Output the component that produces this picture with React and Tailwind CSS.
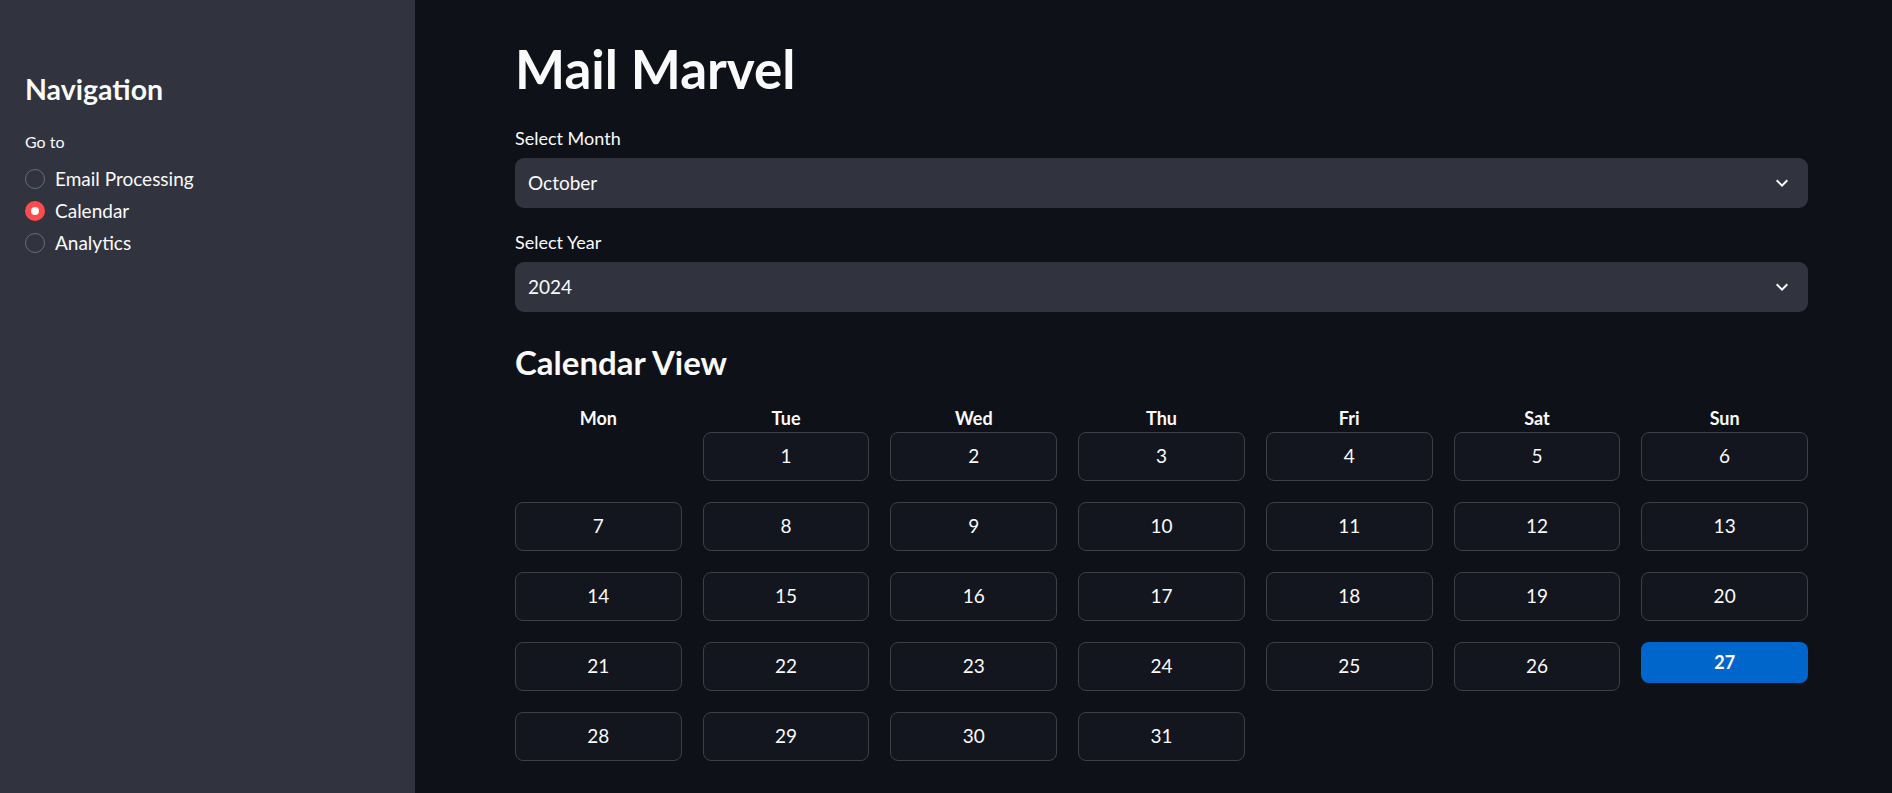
import { useState } from "react";

const FONT = { fontFamily: "Lato, 'Noto Sans', 'Liberation Sans', sans-serif" };

const MONTHS = ["October"];
const DAYS = ["Mon", "Tue", "Wed", "Thu", "Fri", "Sat", "Sun"];

// material "expand_more"
function Chevron() {
  return (
    <svg width="24" height="24" viewBox="0 0 24 24" fill="#fafafa">
      <path d="M16.59 8.59L12 13.17 7.41 8.59 6 10l6 6 6-6z" />
    </svg>
  );
}

function SelectBox({ label, value }) {
  return (
    <div>
      <div className="text-[18px] leading-[24px] text-[#fafafa] mb-2">{label}</div>
      <div className="h-[50px] rounded-[9px] bg-[#31333f] flex items-center justify-between pl-[13px] pr-[14px]">
        <span className="text-[19px] text-[#fafafa]">{value}</span>
        <Chevron />
      </div>
    </div>
  );
}

function Radio({ label, checked, onClick }) {
  return (
    <div className="h-8 flex items-center gap-[10px] cursor-pointer" onClick={onClick}>
      {checked ? (
        <span className="w-5 h-5 rounded-full bg-[#ff4b4b] flex items-center justify-center ml-px">
          <span className="w-[8px] h-[8px] rounded-full bg-[#fafafa]" />
        </span>
      ) : (
        <span className="w-5 h-5 rounded-full border border-[#6b6d76] ml-px" />
      )}
      <span className="text-[19px] text-[#fafafa]">{label}</span>
    </div>
  );
}

export default function App() {
  const [page, setPage] = useState("Calendar");
  const [picked, setPicked] = useState(27);

  // October 2024 starts on a Tuesday
  const cells = [null, ...Array.from({ length: 31 }, (_, i) => i + 1)];

  return (
    <div className="flex w-full h-[793px] overflow-hidden bg-[#0e1117]" style={FONT}>
      {/* SIDEBAR */}
      <aside className="w-[415px] shrink-0 bg-[#31333f] pl-[25px] pt-[71px]">
        <h2 className="text-[28.5px] leading-[36px] font-bold text-[#fafafa]">Navigation</h2>
        <div className="mt-[25px] text-[16px] leading-[20px] text-[#fafafa]">Go to</div>
        <div className="mt-[11px] -ml-px">
          {["Email Processing", "Calendar", "Analytics"].map((p) => (
            <Radio key={p} label={p} checked={page === p} onClick={() => setPage(p)} />
          ))}
        </div>
      </aside>

      {/* MAIN */}
      <main className="flex-1 pl-[100px] pr-[84px] pt-[39px]">
        <h1 className="text-[53px] leading-[60px] font-bold text-[#fafafa]">Mail Marvel</h1>

        <div className="mt-[27px]">
          <SelectBox label="Select Month" value={MONTHS[0]} />
        </div>
        <div className="mt-[22px]">
          <SelectBox label="Select Year" value="2024" />
        </div>

        <h3 className="mt-[30px] text-[33px] leading-[40px] font-bold text-[#fafafa]">Calendar View</h3>

        <div className="mt-[24px] grid grid-cols-7 gap-x-[21px]">
          {DAYS.map((d) => (
            <div key={d} className="text-center text-[18px] leading-[24px] font-bold text-[#fafafa]">
              {d}
            </div>
          ))}
        </div>

        <div className="mt-[2px] grid grid-cols-7 gap-x-[21px] gap-y-[21px]">
          {cells.map((n, i) =>
            n === null ? (
              <div key={i} className="h-[49px]" />
            ) : n === picked ? (
              <div key={i} className="h-[49px]">
                <button className="w-full h-[41px] rounded-[8px] bg-[#0066cc] text-white text-[18px] font-bold">
                  {n}
                </button>
              </div>
            ) : (
              <button
                key={i}
                onClick={() => setPicked(n)}
                className="h-[49px] rounded-[8px] border border-[#3e4048] bg-[#13161e] text-[#fafafa] text-[19px]"
              >
                {n}
              </button>
            )
          )}
        </div>
      </main>
    </div>
  );
}
